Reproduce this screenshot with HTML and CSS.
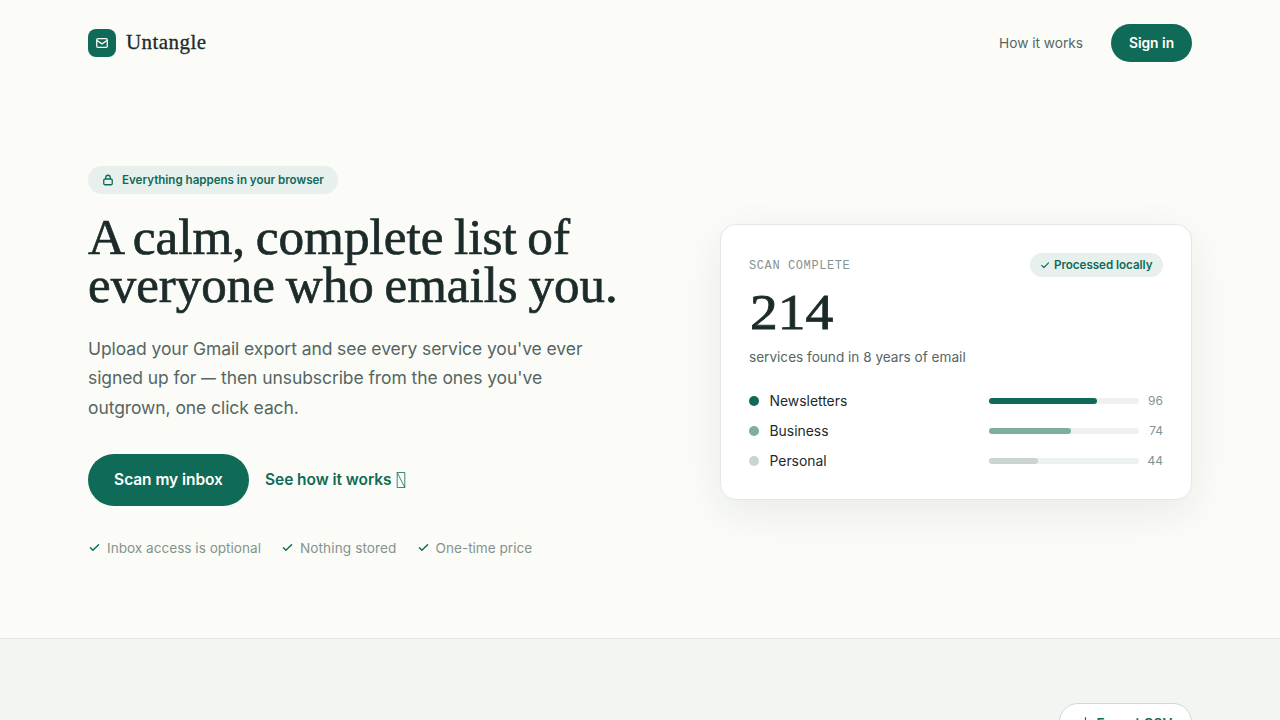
FILE: index.html
```html
<!DOCTYPE html>
<html lang="en">
<head>
<meta charset="utf-8">
<title>Untangle</title>
<link rel="stylesheet" href="styles.css">
</head>
<body>
<header class="nav">
  <a class="brand">
    <span class="logo"><svg width="14" height="14" viewBox="0 0 24 24" fill="none" stroke="currentColor" stroke-width="2.2" stroke-linecap="round" stroke-linejoin="round"><rect x="3" y="4.5" width="18" height="15" rx="2"/><path d="M4 8l8 5.500L20 8"/></svg></span>
    <span class="brand-name">Untangle</span>
  </a>
  <nav class="links">
    <a class="how">How it works</a>
    <a class="signin">Sign in</a>
  </nav>
</header>
<main class="hero">
  <section class="copy">
    <div class="pill"><svg width="12" height="12" viewBox="0 0 24 24" fill="none" stroke="currentColor" stroke-width="2.6" stroke-linejoin="round"><rect x="3.500" y="10" width="17" height="11.5" rx="2.5"/><path d="M7.500 10V7a4.500 4.500 0 0 1 9 0v3"/></svg><span class="pill-text">Everything happens in your browser</span></div>
    <h1 class="title"><span class="t1">A calm, complete list of</span><br><span class="t2">everyone who emails you.</span></h1>
    <p class="lead"><span class="l1">Upload your Gmail export and see every service you've ever</span><br><span class="l2">signed up for <span class="dash">—</span> then unsubscribe from the ones you've</span><br><span class="l3">outgrown, one click each.</span></p>
    <div class="actions">
      <a class="primary"><span class="primary-text">Scan my inbox</span></a>
      <a class="secondary"><span class="secondary-text">See how it works</span><svg width="10" height="16" viewBox="0 0 10 16" fill="none" stroke="currentColor" stroke-width=".8"><path d="M1.200.5h7.600v15H1.200zL8.800 15.500"/></svg></a>
    </div>
    <ul class="checks">
      <li><svg class="tick" width="13" height="13" viewBox="0 0 24 24"><path d="M4.500 12.500l4.500 4.500L19.500 7"/></svg><span class="c1">Inbox access is optional</span></li>
      <li><svg class="tick" width="13" height="13" viewBox="0 0 24 24"><path d="M4.500 12.500l4.500 4.500L19.500 7"/></svg><span class="c2">Nothing stored</span></li>
      <li><svg class="tick" width="13" height="13" viewBox="0 0 24 24"><path d="M4.500 12.500l4.500 4.500L19.500 7"/></svg><span class="c3">One-time price</span></li>
    </ul>
  </section>
  <section class="card">
    <div class="card-top"><span class="eyebrow">SCAN COMPLETE</span><span class="badge"><svg class="tick" width="10" height="10" viewBox="0 0 24 24"><path d="M4 13l5.500 5L20.500 7"/></svg><span class="badge-text">Processed locally</span></span></div>
    <div class="total">214</div>
    <div class="sub">services found in 8 years of email</div>
    <div class="rows">
      <div class="row"><i class="dot green"></i><span class="name">Newsletters</span><span class="track"><span class="fill green" style="width:72%"></span></span><span class="num">96</span></div>
      <div class="row"><i class="dot sage"></i><span class="name">Business</span><span class="track"><span class="fill sage" style="width:54.6%"></span></span><span class="num">74</span></div>
      <div class="row"><i class="dot mist"></i><span class="name">Personal</span><span class="track"><span class="fill mist" style="width:32.6%"></span></span><span class="num">44</span></div>
    </div>
  </section>
</main>
<section class="band">
  <a class="export"><svg width="13" height="13" viewBox="0 0 24 24" fill="none" stroke="currentColor" stroke-width="2.2" stroke-linecap="round" stroke-linejoin="round"><path d="M12 3v13M6.500 11l5.500 5.500L17.500 11M4 21h16"/></svg><span class="export-text">Export CSV</span></a>
</section>
</body>
</html>
```
FILE: styles.css
```css
* { box-sizing: border-box; }
html, body { height: 100%; }
body {
  margin: 0;
  overflow: hidden;
  display: flex;
  flex-direction: column;
  background: #fbfcf8;
  color: #1c2b2a;
  font-family: Inter, "Liberation Sans", sans-serif;
}
svg { display: block; flex: none; }
span { white-space: nowrap; }

.nav {
  height: 86px;
  flex: none;
  padding: 0 88px;
  display: flex;
  align-items: center;
  justify-content: space-between;
}
.brand { display: flex; align-items: center; gap: 10px; }
.logo {
  width: 28px;
  height: 28px;
  border-radius: 8px;
  background: #0f6b57;
  color: #fcfcf8;
  display: flex;
  align-items: center;
  justify-content: center;
}
.brand-name {
  padding-bottom: 2px;
  font: 21px/26px "Liberation Serif", serif;
  letter-spacing: .45px;
  -webkit-text-stroke: .3px;
}
.links { display: flex; align-items: center; gap: 28px; }
.how {
  width: 84px;
  font-size: 13.7px;
  line-height: 20px;
  color: #566663;
  white-space: nowrap;
}
.signin {
  width: 81px;
  height: 38px;
  border-radius: 19px;
  background: #0f6b57;
  color: #fff;
  font-size: 13.8px;
  font-weight: 600;
  line-height: 38px;
  text-align: center;
}

.hero {
  height: 552px;
  flex: none;
  padding: 80px 88px 0;
  display: flex;
  justify-content: space-between;
  align-items: flex-start;
}
.copy { width: 560px; }
.pill {
  width: 250px;
  height: 28px;
  border-radius: 14px;
  padding-left: 14px;
  background: #e7f0ec;
  color: #0f6b57;
  display: flex;
  align-items: center;
  gap: 8px;
  font-size: 11.6px;
  font-weight: 600;
}
.pill-text, .badge-text { line-height: 16px; padding-bottom: 1px; letter-spacing: -.02px; }
.title {
  margin: 19px 0 0;
  font: 50px/48px "Liberation Serif", serif;
  -webkit-text-stroke: .7px;
}
.t1, .t2 { display: inline-block; vertical-align: top; transform-origin: left; }
.t1 { transform: scaleX(1.025); word-spacing: -2.2px; }
.t2 { transform: scaleX(1.02); word-spacing: -1.8px; }
.lead {
  margin: 24.6px 0 0;
  font-size: 17.5px;
  line-height: 29.5px;
  letter-spacing: -.08px;
  color: #566663;
}
.dash { display: inline-block; width: 15px; transform: scaleX(.85); transform-origin: left; }
.actions { display: flex; align-items: center; gap: 16px; margin-top: 31.9px; }
.primary {
  width: 161px;
  height: 52px;
  border-radius: 26px;
  background: #0f6b57;
  color: #fff;
  font-size: 15.5px;
  font-weight: 600;
  display: flex;
  align-items: center;
  justify-content: center;
}
.primary-text, .secondary-text { line-height: 20px; padding-top: 1px; letter-spacing: -.05px; }
.secondary {
  display: flex;
  align-items: center;
  gap: 4px;
  color: #0f6b57;
  font-size: 15.5px;
  font-weight: 600;
}
.checks {
  list-style: none;
  margin: 32px 0 0;
  padding: 0;
  display: flex;
  gap: 20px;
  font-size: 13.6px;
  line-height: 20px;
  color: #84938f;
}
.checks li { display: flex; align-items: center; gap: 6px; }
.c2 { letter-spacing: .1px; }
.tick {
  fill: none;
  stroke: #0f6b57;
  stroke-width: 2.7;
  stroke-linecap: round;
  stroke-linejoin: round;
}

.card {
  width: 472px;
  height: 276px;
  margin-top: 58px;
  padding: 28px;
  border: 1px solid #e4e8e5;
  border-radius: 16px;
  background: #fff;
  box-shadow: 0 12px 40px rgba(28, 43, 42, .08);
}
.card-top { height: 24px; display: flex; justify-content: space-between; align-items: center; }
.eyebrow {
  padding-top: 2px;
  font: 12px/16px "Liberation Mono", monospace;
  letter-spacing: .6px;
  color: #84938f;
}
.badge {
  width: 133px;
  height: 24px;
  border-radius: 12px;
  padding-left: 10px;
  background: #e7f0ec;
  color: #0f6b57;
  display: flex;
  align-items: center;
  gap: 4px;
  font-size: 11.6px;
  font-weight: 600;
}
.total {
  margin-top: 9px;
  padding-left: 1px;
  font: 50px/52px "Liberation Serif", serif;
  transform: scaleX(1.11);
  transform-origin: left;
  -webkit-text-stroke: .8px;
}
.sub { margin-top: 9px; font-size: 13.6px; line-height: 20px; color: #566663; white-space: nowrap; }
.rows { display: flex; flex-direction: column; gap: 10px; margin-top: 24px; }
.row { height: 20px; display: flex; align-items: center; }
.dot { width: 10px; height: 10px; border-radius: 50%; margin-right: 10.5px; }
.name { flex: 1; font-size: 13.9px; line-height: 18px; padding-bottom: 1px; }
.track { width: 150px; height: 6px; border-radius: 3px; background: #edf2ef; display: flex; }
.fill { border-radius: 3px; }
.green { background: #0f6b57; }
.sage { background: #7eae9e; }
.mist { background: #cad5d0; }
.num { width: 24px; text-align: right; font-size: 12px; line-height: 16px; color: #84938f; }

.band {
  flex: 1;
  min-height: 0;
  border-top: 1px solid #e4e8e5;
  background: #f3f5f3;
  padding: 64px 88px 0;
  display: flex;
  justify-content: flex-end;
  align-items: flex-start;
}
.export {
  width: 133px;
  height: 38px;
  border: 1px solid #d0d9d5;
  border-radius: 19px;
  background: #fff;
  color: #0f6b57;
  display: flex;
  align-items: center;
  justify-content: center;
  gap: 5px;
  font-size: 13.7px;
  font-weight: 600;
}
.export-text { padding-top: 1px; }
```
